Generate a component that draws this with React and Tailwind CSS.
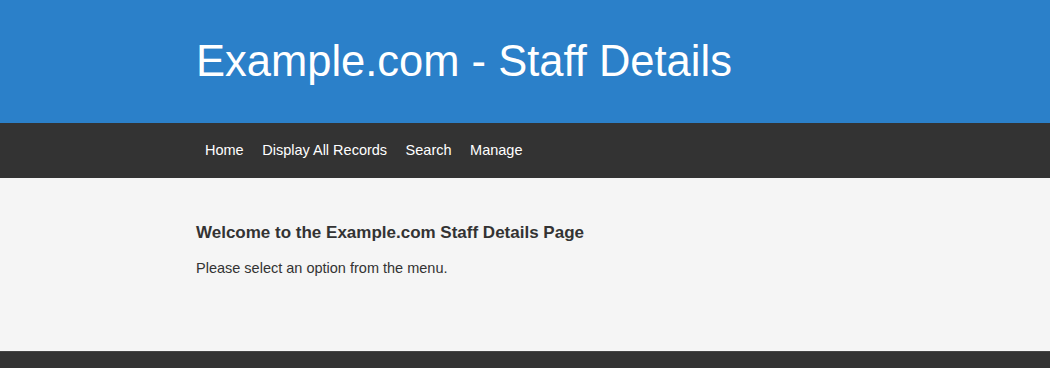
export default function App() {
  return (
    <div className="bg-[#f5f5f5]" style={{ fontFamily: '"Liberation Sans", Arial, sans-serif' }}>
      <header className="bg-[#2b80c9] h-[123px]">
        <div className="mx-auto w-[658px] pt-[36px]">
          <h1 className="text-white text-[43.5px] leading-[50px] font-normal m-0">Example.com - Staff Details</h1>
        </div>
      </header>
      <nav className="bg-[#333333] h-[55px]">
        <div className="mx-auto w-[658px] flex items-center h-full gap-[18.5px] pl-[9px]">
          {["Home", "Display All Records", "Search", "Manage"].map((t) => (
            <a key={t} className="text-white text-[14.5px]" href="#">
              {t}
            </a>
          ))}
        </div>
      </nav>
      <main className="h-[173px]">
        <div className="mx-auto w-[658px] pt-[44px]">
          <h2 className="text-[#333333] text-[17px] font-bold leading-[22px]">Welcome to the Example.com Staff Details Page</h2>
          <p className="text-[#333333] text-[14.5px] leading-[20px] mt-[14px]">Please select an option from the menu.</p>
        </div>
      </main>
      <footer className="bg-[#333333] h-[17px] border-t border-[#444]"></footer>
    </div>
  );
}
